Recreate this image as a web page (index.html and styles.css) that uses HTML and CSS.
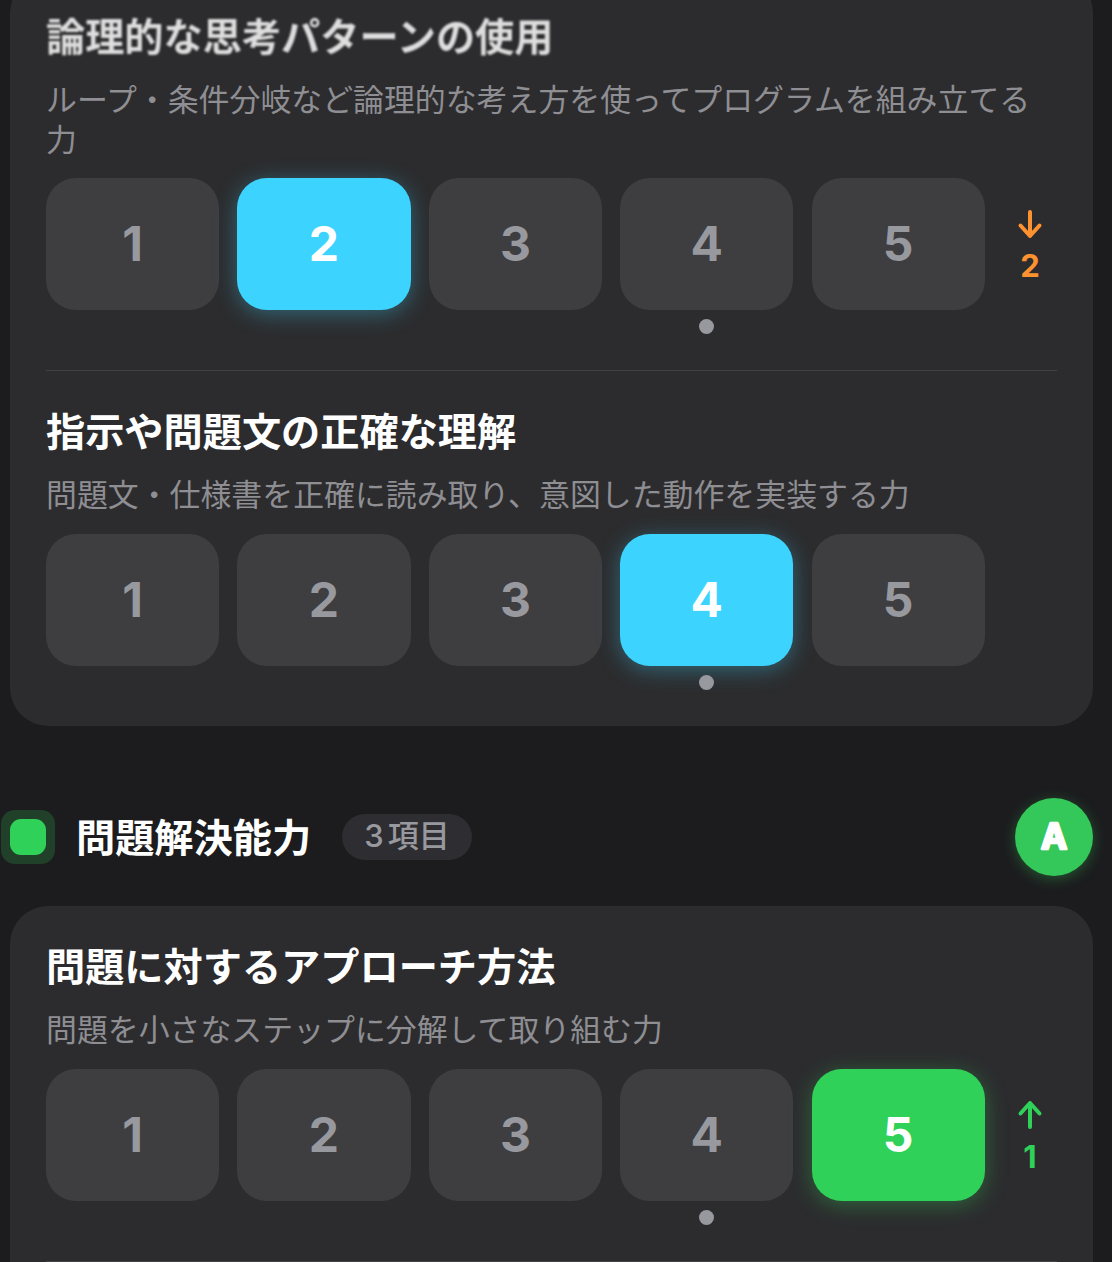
FILE: index.html
```html
<!DOCTYPE html>
<html lang="ja">
<head>
  <meta charset="UTF-8" />
  <meta name="viewport" content="width=device-width, initial-scale=1.0" />
  <title>スキル評価</title>
  <link rel="stylesheet" href="styles.css">
</head>
<body>
  <div class="page">
    <section class="card card-first">
      <div class="item">
        <h3 class="item-title faded">論理的な思考パターンの使用</h3>
        <p class="item-desc">ループ・条件分岐など論理的な考え方を使ってプログラムを組み立てる力</p>
        <div class="scale">
          <button class="score">1</button>
          <button class="score selected-cyan">2</button>
          <button class="score">3</button>
          <button class="score">4<span class="dot"></span></button>
          <button class="score">5</button>
          <div class="delta delta-down">
            <svg class="arrow" viewBox="0 0 24 28"><path d="M12 2V26M2.500 15.500L12 26L21.500 15.500"/></svg>
            <span class="delta-num">2</span>
          </div>
        </div>
      </div>
      <div class="item">
        <h3 class="item-title">指示や問題文の正確な理解</h3>
        <p class="item-desc">問題文・仕様書を正確に読み取り、意図した動作を実装する力</p>
        <div class="scale">
          <button class="score">1</button>
          <button class="score">2</button>
          <button class="score">3</button>
          <button class="score selected-cyan">4<span class="dot"></span></button>
          <button class="score">5</button>
          <div class="delta"></div>
        </div>
      </div>
    </section>

    <header class="section-head">
      <span class="section-icon"><span class="section-icon-inner"></span></span>
      <h2 class="section-title">問題解決能力</h2>
      <span class="section-count">3 項目</span>
      <span class="grade"><svg class="grade-letter" viewBox="0 0 78 78"><text x="39" y="51">A</text></svg></span>
    </header>

    <section class="card card-open">
      <div class="item">
        <h3 class="item-title">問題に対するアプローチ方法</h3>
        <p class="item-desc">問題を小さなステップに分解して取り組む力</p>
        <div class="scale">
          <button class="score">1</button>
          <button class="score">2</button>
          <button class="score">3</button>
          <button class="score">4<span class="dot"></span></button>
          <button class="score selected-green">5</button>
          <div class="delta delta-up">
            <svg class="arrow" viewBox="0 0 24 28"><path d="M12 26V2M2.500 12.500L12 2L21.500 12.500"/></svg>
            <span class="delta-num">1</span>
          </div>
        </div>
      </div>
    </section>
  </div>
</body>
</html>
```

FILE: styles.css
```css
html, body {
  margin: 0;
  height: 1262px;
  overflow: hidden;
}
body {
  background-color: #1c1c1e;
  color: #fff;
  font-family: "Inter", "Noto Sans CJK JP", sans-serif;
}
.page {
  padding: 0 19px 0 10px;
}
.card {
  background: #2c2c2e;
  border-radius: 38px;
  padding: 0 36px;
}
.card-first {
  margin-top: -25px;
}
.card-open {
  border-radius: 38px 38px 0 0;
}
.item {
  padding: 36px 0 60px;
  border-bottom: 1px solid #414144;
}
.item:last-child {
  border-bottom: none;
}
.card-open .item:last-child {
  border-bottom: 1px solid #414144;
}
.item-title {
  margin: 0 0 21px;
  font-family: "Noto Sans CJK JP", sans-serif;
  font-size: 39.2px;
  line-height: 45px;
  font-weight: 700;
}
.item-title.faded {
  margin-bottom: 20px;
  line-height: 47px;
  color: #dedede;
  filter: blur(0.8px);
}
.item-desc {
  margin: 0 0 21px;
  font-family: "Noto Sans CJK JP", sans-serif;
  font-size: 30.9px;
  line-height: 40px;
  color: #8e8e93;
}
.faded + .item-desc {
  margin-bottom: 20px;
}
.scale {
  display: flex;
  gap: 18.3px;
}
.score {
  position: relative;
  flex: 1;
  height: 132px;
  padding: 0 0 1px;
  border: none;
  border-radius: 30px;
  background: #3e3e41;
  color: #98989f;
  font-family: "Inter", sans-serif;
  font-size: 48px;
  font-weight: 700;
}
.selected-cyan {
  background: #3cd3fe;
  color: #fff;
  box-shadow: 0 4px 22px rgba(60, 211, 254, 0.35);
}
.selected-green {
  background: #30d158;
  color: #fff;
  box-shadow: 0 4px 22px rgba(48, 209, 88, 0.35);
}
.dot {
  position: absolute;
  left: 50%;
  bottom: -24px;
  width: 15px;
  height: 15px;
  margin-left: -7.500px;
  border-radius: 50%;
  background: #98989f;
}
.delta {
  flex: 0 0 54px;
  display: flex;
  flex-direction: column;
  align-items: center;
  justify-content: center;
  gap: 13px;
  padding-top: 3px;
}
.delta-down {
  color: #ff9230;
}
.delta-up {
  color: #30d158;
}
.arrow {
  width: 24px;
  height: 28px;
  overflow: visible;
  fill: none;
  stroke: currentColor;
  stroke-width: 4;
  stroke-linecap: round;
  stroke-linejoin: round;
}
.delta-num {
  font-size: 31px;
  line-height: 30px;
  font-weight: 700;
}
.section-head {
  display: flex;
  align-items: center;
  height: 78px;
  margin: 72px 0 30px -9px;
}
.section-icon {
  display: flex;
  align-items: center;
  justify-content: center;
  width: 54px;
  height: 54px;
  margin-right: 21px;
  border-radius: 14px;
  background: rgba(48, 209, 88, 0.2);
}
.section-icon-inner {
  width: 36px;
  height: 36px;
  border-radius: 11px;
  background: #30d158;
}
.section-title {
  margin: 0 31px 0 0;
  padding-bottom: 4px;
  font-family: "Noto Sans CJK JP", sans-serif;
  font-size: 39.2px;
  line-height: 50px;
  font-weight: 700;
}
.section-count {
  padding: 0 22px;
  height: 46px;
  line-height: 44px;
  border-radius: 23px;
  background: #2e2e32;
  color: #98989f;
  font-family: "Inter", "Noto Sans CJK JP", sans-serif;
  font-size: 31px;
  font-weight: 500;
  word-spacing: -4px;
}
.grade {
  width: 78px;
  height: 78px;
  margin-left: auto;
  border-radius: 50%;
  background: #34c759;
  box-shadow: 0 3px 14px rgba(52, 199, 89, 0.35);
}
.grade-letter {
  display: block;
  width: 78px;
  height: 78px;
}
.grade-letter text {
  fill: #fff;
  stroke: #fff;
  stroke-width: 2.500;
  stroke-linejoin: round;
  text-anchor: middle;
  font-size: 35px;
  font-weight: 700;
}
```
